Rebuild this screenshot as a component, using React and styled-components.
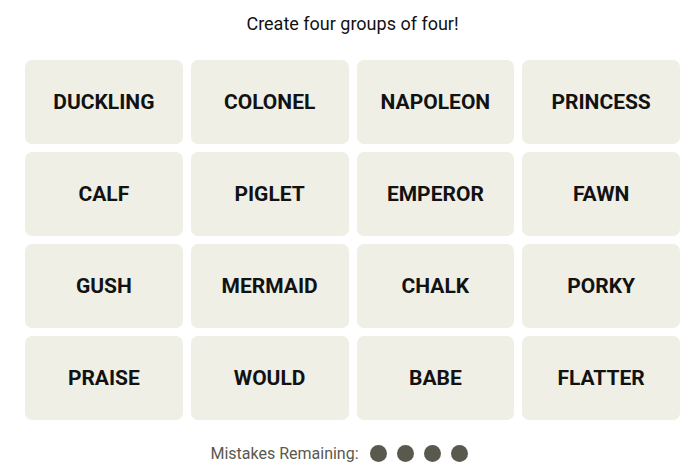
import React from 'react';
import styled, { createGlobalStyle } from 'styled-components';

const GlobalStyle = createGlobalStyle`
  html, body {
    margin: 0;
    padding: 0;
    background: #fff;
  }
  body {
    font-family: 'Roboto', 'Liberation Sans', sans-serif;
    color: #121212;
  }
`;

const Page = styled.div`
  box-sizing: border-box;
  width: 700px;
  height: 469px;
  padding-left: 5px;
  display: flex;
  flex-direction: column;
  align-items: center;
  overflow: hidden;
`;

const Prompt = styled.p`
  margin: 13px 0 0;
  font-size: 18px;
  line-height: 22px;
  font-weight: 400;
  color: #121212;
`;

const Grid = styled.div`
  margin-top: 25px;
  width: 655px;
  display: grid;
  grid-template-columns: repeat(4, 1fr);
  grid-auto-rows: 84px;
  gap: 8px;
`;

const Tile = styled.button`
  border: none;
  border-radius: 7px;
  background: #efefe6;
  color: #121212;
  font-family: 'Roboto', 'Liberation Sans', sans-serif;
  font-weight: 700;
  font-size: 21px;
  text-transform: uppercase;
  display: flex;
  align-items: center;
  justify-content: center;
  cursor: pointer;
  padding: 0 0 1px;
`;

const Footer = styled.div`
  margin-top: 24px;
  margin-right: 27px;
  display: flex;
  align-items: center;
  gap: 11px;
  color: #5a594e;
  font-size: 16px;
`;

const Dots = styled.div`
  display: flex;
  gap: 10px;
`;

const Dot = styled.span`
  width: 17px;
  height: 17px;
  border-radius: 50%;
  background: ${({ used }) => (used ? 'transparent' : '#5a594e')};
`;

const words = [
  'DUCKLING', 'COLONEL', 'NAPOLEON', 'PRINCESS',
  'CALF', 'PIGLET', 'EMPEROR', 'FAWN',
  'GUSH', 'MERMAID', 'CHALK', 'PORKY',
  'PRAISE', 'WOULD', 'BABE', 'FLATTER',
];

const App = () => (
  <Page>
    <GlobalStyle />
    <Prompt>Create four groups of four!</Prompt>
    <Grid>
      {words.map((w) => (
        <Tile key={w}>{w}</Tile>
      ))}
    </Grid>
    <Footer>
      Mistakes Remaining:
      <Dots>
        {[0, 1, 2, 3].map((i) => (
          <Dot key={i} />
        ))}
      </Dots>
    </Footer>
  </Page>
);

export default App;
